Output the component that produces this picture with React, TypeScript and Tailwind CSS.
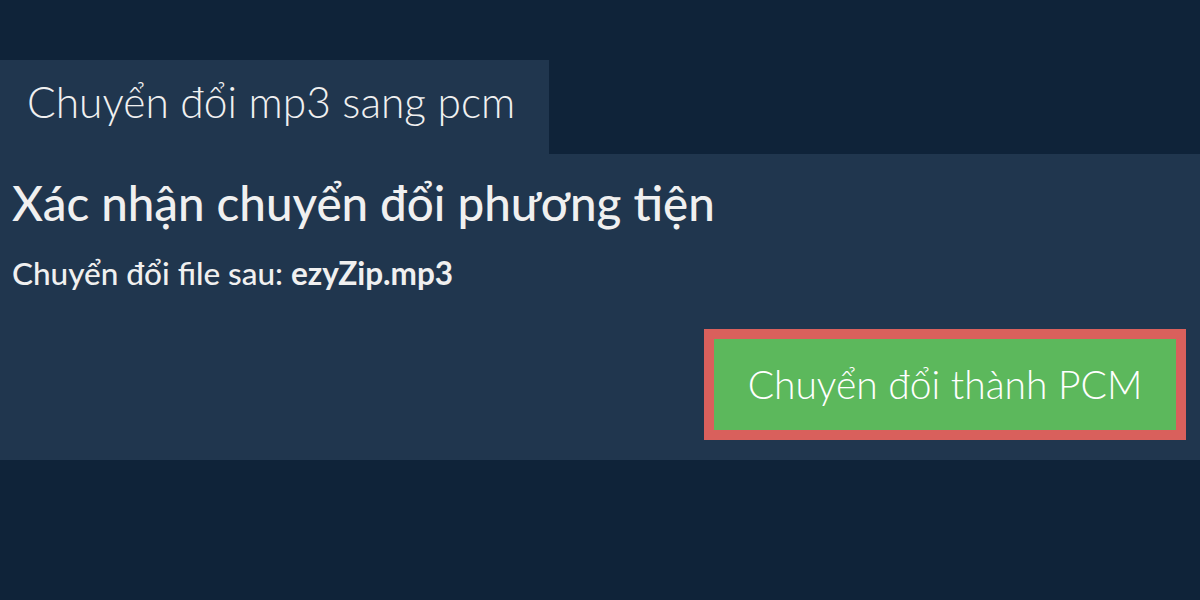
import React from 'react';

const App: React.FC = () => {
  return (
    <div className="min-h-[600px] w-[1200px] bg-[#0f2339] pt-[60px] font-['Lato',sans-serif] text-white">
      <div className="flex">
        <div className="w-[549px] h-[94px] bg-[#20364e] pl-[27px] pt-[21px]">
          <div className="text-[42.5px] leading-[42.5px] font-light text-[#f0f0f0] whitespace-nowrap">
            Chuyển đổi mp3 sang pcm
          </div>
        </div>
      </div>
      <div className="bg-[#20364e] h-[306px] px-[12px] pt-[17px]">
        <h1 className="text-[47.5px] leading-[64px] font-medium text-[#f0f0f0] whitespace-nowrap">
          Xác nhận chuyển đổi phương tiện
        </h1>
        <p className="mt-[18px] text-[31.5px] leading-[40px] font-medium text-[#f0f0f0] whitespace-nowrap">
          Chuyển đổi file sau: <span className="font-bold">ezyZip.mp3</span>
        </p>
        <div className="flex justify-end mt-[36px] pr-[2px]">
          <button className="w-[482px] h-[111px] bg-[#5cb85c] border-[10px] border-[#d9605c] text-[39px] font-light text-white">
            Chuyển đổi thành PCM
          </button>
        </div>
      </div>
    </div>
  );
};

export default App;
